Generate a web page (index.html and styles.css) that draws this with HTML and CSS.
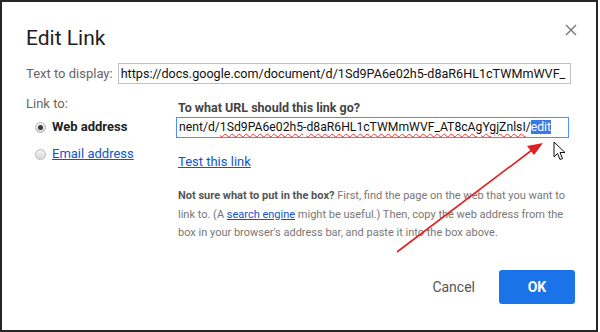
FILE: index.html
```html
<!DOCTYPE html>
<html lang="en">
<head>
<meta charset="UTF-8">
<meta name="viewport" content="width=device-width, initial-scale=1.0">
<title>Edit Link</title>
<link rel="stylesheet" href="styles.css">
</head>
<body>
<div class="dialog">
  <div class="header">
    <h1>Edit Link</h1>
    <svg class="close" width="12" height="12" viewBox="0 0 12 12">
      <path d="M1 1 L11 11 M11 1 L1 11" stroke="#777" stroke-width="1.4"/>
    </svg>
  </div>

  <div class="display-row">
    <label class="muted">Text to display:</label>
    <div class="field">https://docs.google.com/document/d/1Sd9PA6e02h5-d8aR6HL1cTWMmWVF_</div>
  </div>

  <div class="body">
    <div class="link-to">
      <div class="muted">Link to:</div>
      <div class="option"><span class="radio checked"></span><b>Web address</b></div>
      <div class="option"><span class="radio"></span><a href="#">Email address</a></div>
    </div>

    <div class="url-pane">
      <div class="question">To what URL should this link go?</div>
      <div class="field focused">nent/d/<span class="typo">1Sd9PA6e02h5</span>-<span class="typo">d8aR6HL1cTWMmWVF_AT8cAgYgjZnlsI</span>/<span class="selected">edit</span></div>
      <a href="#" class="test-link">Test this link</a>
      <p class="help"><b>Not sure what to put in the box?</b> First, find the page on the web that you want to link to. (A <a href="#">search engine</a> might be useful.) Then, copy the web address from the box in your browser's address bar, and paste it into the box above.</p>
    </div>
  </div>

  <div class="buttons">
    <button class="cancel">Cancel</button>
    <button class="ok">OK</button>
  </div>

  <svg class="arrow" width="600" height="332" viewBox="0 0 600 332">
    <line x1="397" y1="252" x2="532" y2="150" stroke="#e02020" stroke-width="1.6"/>
    <polygon points="543,143 527,146 534,155" fill="#e02020"/>
  </svg>
  <svg class="cursor" width="14" height="20" viewBox="0 0 14 20">
    <path d="M1 1 L1 16 L4.5 12.5 L7 18.5 L9.5 17.5 L7 11.5 L12 11.5 Z" fill="#fff" stroke="#111" stroke-width="1"/>
  </svg>
</div>
</body>
</html>
```

FILE: styles.css
```css
body {
  margin: 0;
  background-color: #fff;
  font-family: Roboto, Arial, sans-serif;
  color: #222;
}

.dialog {
  position: relative;
  box-sizing: border-box;
  width: 598px;
  height: 332px;
  border: 2px solid #262626;
  background-color: #fff;
  padding: 23px 21px 0 24px;
}

.header {
  display: flex;
  justify-content: space-between;
  align-items: flex-start;
}

h1 {
  margin: 0;
  font-size: 21px;
  font-weight: 400;
  line-height: 26px;
  color: #202124;
}

.close {
  margin-top: -1px;
  margin-right: -2px;
}

.muted {
  color: #666;
  font-size: 13px;
}

.display-row {
  display: flex;
  align-items: center;
  gap: 5px;
  margin-top: 12px;
}

.field {
  box-sizing: border-box;
  height: 21px;
  border: 1px solid #c0c0c0;
  padding: 0 2px;
  font-size: 12.6px;
  line-height: 19px;
  color: #111;
  white-space: nowrap;
  overflow: hidden;
  flex: 1;
}

.display-row .field {
  margin-right: 4px;
}

.field.focused {
  border-color: #4d90fe;
  width: 393px;
  flex: none;
  margin-top: 1px;
  font-size: 12.2px;
}

.typo {
  text-decoration: underline wavy #e33;
  text-decoration-thickness: 1px;
  text-underline-offset: 2px;
}

.selected {
  background-color: #3b78e7;
  color: #fff;
}

.body {
  display: flex;
  margin-top: 12px;
}

.link-to {
  width: 150px;
  flex-shrink: 0;
  font-size: 13px;
  line-height: 16px;
}

.option {
  display: flex;
  align-items: center;
  gap: 6px;
  margin-left: 9px;
  margin-top: 7px;
  font-size: 13px;
}

.option + .option {
  margin-top: 11px;
}

.option b {
  color: #222;
}

.radio {
  box-sizing: border-box;
  width: 11px;
  height: 11px;
  border-radius: 50%;
  border: 1px solid #b8b8b8;
  background: linear-gradient(#f4f4f4, #d8d8d8);
  display: flex;
  align-items: center;
  justify-content: center;
}

.radio.checked::after {
  content: "";
  width: 5px;
  height: 5px;
  border-radius: 50%;
  background-color: #3a3a3a;
}

a {
  color: #1155cc;
}

.url-pane {
  padding-top: 4px;
  display: flex;
  flex-direction: column;
  align-items: flex-start;
}

.question {
  font-size: 12.5px;
  font-weight: 700;
  color: #444;
  line-height: 16px;
  margin-left: 2px;
}

.test-link {
  font-size: 13px;
  line-height: 16px;
  margin-top: 16px;
  margin-left: 2px;
}

.help {
  margin: 17px 0 0 2px;
  width: 392px;
  font-size: 11px;
  line-height: 18.5px;
  color: #777;
}

.help b {
  color: #555;
}

.buttons {
  display: flex;
  justify-content: flex-end;
  align-items: center;
  gap: 24px;
  margin-top: 27px;
}

button {
  font-family: Roboto, Arial, sans-serif;
  font-size: 14px;
  border: none;
  cursor: pointer;
}

.cancel {
  background: none;
  color: #555;
  padding: 0;
}

.ok {
  width: 76px;
  height: 34px;
  border-radius: 3px;
  background-color: #1a73e8;
  color: #fff;
  font-weight: 700;
}

.arrow {
  position: absolute;
  left: -2px;
  top: -2px;
  pointer-events: none;
}

.cursor {
  position: absolute;
  left: 551px;
  top: 139px;
}
```
